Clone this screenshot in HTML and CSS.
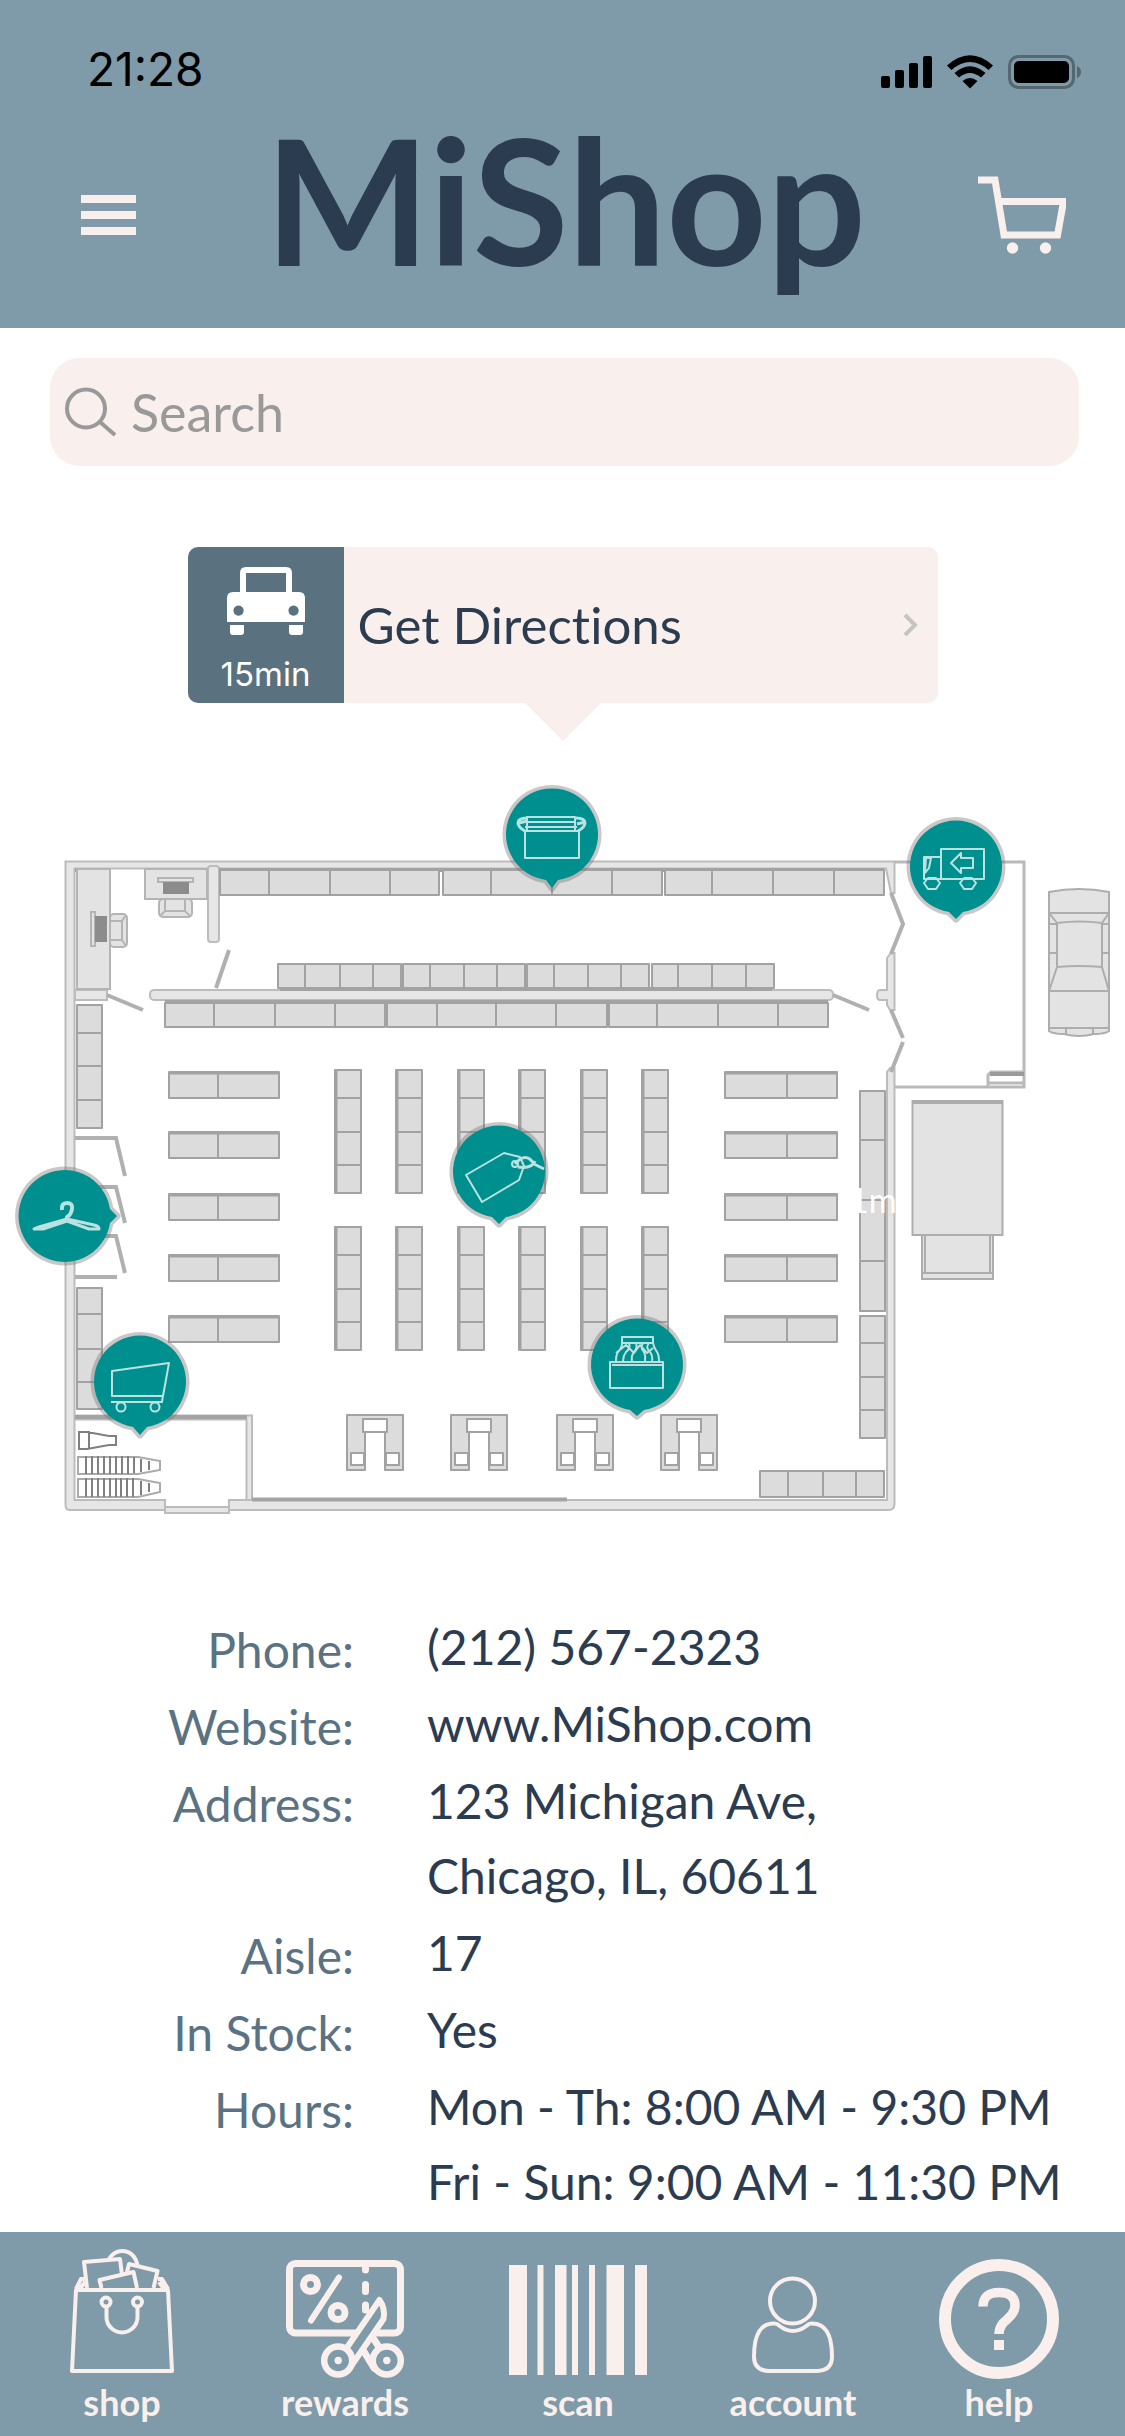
FILE: index.html
```html
<!DOCTYPE html>
<html lang="en">
<head>
<meta charset="utf-8">
<meta name="viewport" content="width=device-width, initial-scale=1">
<title>MiShop</title>
<link rel="stylesheet" href="styles.css">
</head>
<body>
<div class="page">
  <header class="header">
    <div class="status">
      <span class="clock">21:28</span>
      <svg class="status-icons" viewBox="881 54 200 36" width="200" height="36" aria-hidden="true">
        <rect x="881" y="76" width="9" height="12" rx="2"/>
        <rect x="895" y="70" width="9" height="18" rx="2"/>
        <rect x="909" y="63" width="9" height="25" rx="2"/>
        <rect x="923" y="56" width="9" height="32" rx="2"/>
        <path d="M947 65.500Q970 45 993 65.500L988.500 70Q970 54 951.500 70Z"/>
        <path d="M954.500 73Q970 59.500 985.500 73L981 77.500Q970 68.500 959 77.500Z"/>
        <path d="M962.500 81Q970 75 977.500 81L970 88.500Z"/>
        <rect x="1009.500" y="56.500" width="64" height="31" rx="9" fill="none" stroke="#55676f" stroke-width="3"/>
        <rect x="1014" y="61" width="55" height="22" rx="5"/>
        <path d="M1077 66q4 2 4 6t-4 6z" fill="#55676f"/>
      </svg>
    </div>
    <div class="bar">
      <button class="icon-button" type="button" aria-label="Menu">
        <svg viewBox="0 0 55 40" width="55" height="40"><path d="M0 4h55M0 20h55M0 36h55" stroke="#f9efec" stroke-width="8"/></svg>
      </button>
      <h1 class="brand">MiShop</h1>
      <button class="icon-button cart" type="button" aria-label="Cart">
        <svg viewBox="978 176 88 78" width="88" height="78"><path d="M978 180h17l9 55h53.500l6-33.500h-64" fill="none" stroke="#f9efec" stroke-width="7"/><circle cx="1012.500" cy="248" r="5.700" fill="#f9efec"/><circle cx="1045.500" cy="248" r="5.700" fill="#f9efec"/></svg>
      </button>
    </div>
  </header>

  <main class="main">
    <form class="search" role="search">
      <svg viewBox="0 0 52 50" width="52" height="50" aria-hidden="true"><g fill="none" stroke="#999" stroke-width="4"><circle cx="21" cy="21.500" r="19"/><path d="M35 35l15 13"/></g></svg>
      <input class="search-input" type="search" placeholder="Search" aria-label="Search">
    </form>

    <a class="directions" href="#directions">
      <span class="travel">
        <svg viewBox="225 567 78 68" width="78" height="68" aria-hidden="true"><path fill="#fff" fill-rule="evenodd" d="M244 567h40q6 0 6 6v19h7q6 0 6 6v24h-78v-24q0-6 6-6h7v-19q0-6 6-6zM244 573v19h40v-19zM236.500 605.500a5.100 5.100 0 1 0 .1 0zM291.500 605.500a5.100 5.100 0 1 0 .1 0zM228 625h14v7q0 3-3 3h-8q-3 0-3-3zM287 625h14v7q0 3-3 3h-8q-3 0-3-3z"/></svg>
        <span class="minutes">15min</span>
      </span>
      <span class="directions-text">Get Directions</span>
      <svg class="chevron" viewBox="0 0 16 26" width="16" height="26" aria-hidden="true"><path d="M3 3l10 10L3 23" fill="none" stroke="#c4c4c4" stroke-width="4"/></svg>
    </a>

    <svg class="map" viewBox="0 780 1125 740" role="img" aria-label="Store map">
      <!-- outer walls -->
      <g class="wall">
        <path d="M65.500 861.500H894.500V893H891L886 868.500H74.500V1500H165V1510H70q-4.500 0-4.500-5z"/>
        <path d="M229 1500H887V1072l3-4h4.500V1504q0 6-6 6H229z"/>
        <path d="M891 953h3.500v57H890l-3-5v-5h-7q-3 0-3-5t3-5h7v-32z"/>
        <rect x="165" y="1507" width="64" height="6"/>
        <rect x="208" y="866" width="11" height="76" rx="3"/>
        <rect x="150" y="990" width="683" height="10" rx="4"/>
        <rect x="75" y="990" width="32" height="10"/>
        <path d="M75 1415.500h177V1500h-5.500v-80.500H75z"/>
      </g>
      <g class="door">
        <path d="M216 988l13-38M107 995l36 15M833 995l36 15M891 893l12 31-12 30M891 1010l12 28M903 1042l-12 30M75 1138h41l9 38M75 1187h41l9 36M75 1236h41l9 37M75 1277h42"/>
      </g>
      <path d="M75 1417h172M252 1499.500h315M75 870h32M219 870h665M280 989h492M165 1002h663" stroke="#a3a3a3" stroke-width="4" fill="none"/>
      <path d="M895 862h129v225H895M988 1087v-12l3-3h33M988 1083h36" fill="none" stroke="#b9b9b9" stroke-width="3"/>
      <path d="M990 1074h34" stroke="#9a9a9a" stroke-width="4"/>

      <!-- office desks -->
      <g class="desk">
        <rect x="77" y="869" width="33" height="120"/><rect x="145" y="869" width="62" height="30"/>
        <rect x="110" y="914" width="17" height="33" rx="4"/><path d="M110 921h12l4-6M110 940h12l4 6M122 921v19"/>
        <rect x="159" y="899" width="33" height="18" rx="4"/><path d="M165 899v12l-5 5M185 899v12l5 5M165 911h20"/>
        <rect x="91" y="912" width="4" height="34"/><rect x="158" y="878" width="35" height="4"/>
      </g>
      <path d="M95 916h12v26H95zM163 882h26v12h-26z" fill="#8c8c8c"/>

      <!-- wall shelves -->
      <g class="shelf">
        <path d="M220 870h219v25H220zM269 870v25M330 870v25M390 870v25M443 870h219v25H443zM491 870v25M552 870v25M612 870v25M665 870h219v25H665zM712 870v25M773 870v25M834 870v25"/>
        <path d="M278 964h123v24H278zM305 964v24M340 964v24M373 964v24M403 964h122v24H403zM430 964v24M464 964v24M497 964v24M527 964h122v24H527zM554 964v24M588 964v24M621 964v24M652 964h122v24H652zM678 964v24M712 964v24M746 964v24"/>
        <path d="M165 1003h220v24H165zM214 1003v24M275 1003v24M335 1003v24M387 1003h220v24H387zM437 1003v24M496 1003v24M556 1003v24M609 1003h219v24H609zM657 1003v24M718 1003v24M778 1003v24"/>
        <path d="M77 1005h25v123H77zM77 1033h25M77 1066h25M77 1100h25M77 1288h25v121H77zM77 1314h25M77 1349h25M77 1382h25"/>
        <path d="M860 1091h25v220h-25zM860 1140h25M860 1200h25M860 1261h25M860 1316h25v122h-25zM860 1343h25M860 1377h25M860 1410h25"/>
        <path d="M760 1471h124v26H760zM788 1471v26M823 1471v26M856 1471v26"/>
      </g>

      <!-- aisle shelves -->
      <defs>
        <g id="wide"><path d="M0 0h110v26H0zM49 0v26"/><path d="M0 1h110" stroke-width="3"/></g>
        <g id="wide-right"><path d="M0 0h112v26H0zM62 0v26"/><path d="M0 1h112" stroke-width="3"/></g>
        <g id="tall"><path d="M0 0h26v123H0zM0 28h26M0 62h26M0 95h26"/><path d="M1 0v123" stroke-width="3"/></g>
        <g id="till"><path d="M0 0h56v55H38V17H18v38H0z"/><path fill="#fff" d="M16 4h24v13H16zM4 38h13v12H4zM39 38h13v12H39z"/></g>
      </defs>
      <g class="shelf">
        <use href="#wide" x="169" y="1072"/><use href="#wide" x="169" y="1132"/><use href="#wide" x="169" y="1194"/><use href="#wide" x="169" y="1255"/><use href="#wide" x="169" y="1316"/>
        <use href="#wide-right" x="725" y="1072"/><use href="#wide-right" x="725" y="1132"/><use href="#wide-right" x="725" y="1194"/><use href="#wide-right" x="725" y="1255"/><use href="#wide-right" x="725" y="1316"/>
        <use href="#tall" x="335" y="1070"/><use href="#tall" x="396" y="1070"/><use href="#tall" x="458" y="1070"/><use href="#tall" x="519" y="1070"/><use href="#tall" x="581" y="1070"/><use href="#tall" x="642" y="1070"/>
        <use href="#tall" x="335" y="1227"/><use href="#tall" x="396" y="1227"/><use href="#tall" x="458" y="1227"/><use href="#tall" x="519" y="1227"/><use href="#tall" x="581" y="1227"/><use href="#tall" x="642" y="1227"/>
        <use href="#till" x="347" y="1415"/><use href="#till" x="451" y="1415"/><use href="#till" x="557" y="1415"/><use href="#till" x="661" y="1415"/>
      </g>

      <!-- parked trolleys -->
      <g fill="none" stroke="#808080" stroke-width="2">
        <path d="M79 1432h10v17H79zM87 1432l22 4h7v9h-7l-22 4"/>
        <path d="M78 1457h60l22 4v9l-22 4H78zM78 1479h60l22 4v9l-22 5H78z" stroke="#aaa"/>
        <path d="M86 1456v18M92 1456v18M98 1456v18M104 1456v18M110 1456v18M116 1456v18M122 1456v18M128 1456v18M134 1457v16M141 1459v13M149 1461v9M86 1478v19M92 1478v19M98 1478v19M104 1478v19M110 1478v19M116 1478v19M121 1478v19M127 1478v19M133 1478v19M141 1481v14M149 1483v9"/>
      </g>

      <!-- vehicles outside -->
      <g class="vehicle">
        <path d="M1049 892q30-6 60 0v139q-4 3-15 3-15 4-30 0-11 0-15-3z"/>
        <path d="M1049 913h60v78h-60zM1049 913l8 10v44l-8 24M1109 913l-7 10v44l7 24M1057 923q22-3 45 0M1057 967q22-2 45 0M1049 924h8M1102 924h7M1049 953h8M1102 953h7M1049 1028h60M1066 1028v6M1093 1028v6"/>
        <rect x="912.500" y="1101" width="90" height="134"/><path d="M912 1102h90" stroke-width="4"/>
        <path d="M922 1235h71v44h-71zM922 1273h71M925 1235v38M990 1235v38"/>
      </g>
      <text class="distance" x="849" y="1213">1mi</text>

      <!-- department pins -->
      <g class="pin">
        <path d="M546 880l6 8 6-8a46 46 0 1 0-12 0z"/>
        <path d="M949 912l7 7 7-7a46 46 0 1 0-14 0z"/>
        <path d="M492 1217l7 7 7-7a46 46 0 1 0-14 0z"/>
        <path d="M110 1209l7 7-7 7a46 46 0 1 1 0-14z"/>
        <path d="M133 1427l7 8 7-8a46 46 0 1 0-14 0z"/>
        <path d="M630 1410l7 6 7-6a46 46 0 1 0-14 0z"/>
      </g>
      <g class="pin-icon">
        <path d="M525 831h54v27h-54zM527 817h48v5h-48zM525 827h52M527 822v9M575 822v9"/>
        <path d="M527 818q-9 0-9 5 0 4 7 8M519 823l8-2M576 818q9 0 9 5 0 4-7 8M577 824l8-2" stroke-width="3"/>
        <path d="M941 849h43v30h-43zM941 857h-17v22h17M926 858h5l-2 10-4 5zM951 863l10-10v5h12v10h-12v5z"/>
        <path d="M928 878h8l4 5-4 6h-8l-4-6zM964 878h8l4 5-4 6h-8l-4-6z"/>
        <path d="M466 1175l38-22 16 4 4 9-5 14-37 22z"/><circle cx="515" cy="1164" r="3"/>
        <path d="M515 1164q11-13 19 0l10 5M518 1167q14 2 17-6" stroke-width="3"/>
        <path d="M62 1210q-1-7 5-7t5 6-5 8v3" stroke-width="4"/>
        <path d="M67 1219l-28 8q-5 2-5 2h9l24-8 22 8h10q0-3-5-4z" stroke-width="3"/>
        <path d="M169 1363l-57 8v25h51zM111 1402h51l1-7"/><circle cx="121" cy="1407" r="4.500"/><circle cx="155" cy="1407" r="4.500"/>
        <path d="M610 1362h53v26h-53zM612 1365h50M622 1337h31v6h-31zM622 1343q0 5-4 9-2 3-2 9M653 1343q1 5 4 9 2 3 2 9M629 1343q2 5-3 9-3 4-3 9M636 1343q2 5-2 9-3 4-2 9M643 1343q-3 5 1 9 2 4 1 9M649 1343q-4 5 1 9 3 4 2 9M616 1353l10-8 8 8 6-8 7 8 6-5"/>
      </g>
    </svg>

    <dl class="details">
      <dt>Phone:</dt><dd>(212) 567-2323</dd>
      <dt>Website:</dt><dd>www.MiShop.com</dd>
      <dt>Address:</dt><dd>123 Michigan Ave,<br>Chicago, IL, 60611</dd>
      <dt>Aisle:</dt><dd>17</dd>
      <dt>In Stock:</dt><dd>Yes</dd>
      <dt>Hours:</dt><dd>Mon - Th: 8:00 AM - 9:30 PM<br>Fri - Sun: 9:00 AM - 11:30 PM</dd>
    </dl>
  </main>

  <nav class="tabs" aria-label="Main">
    <a class="tab" href="#shop">
      <svg viewBox="70 2249 104 130" width="104" height="130" aria-hidden="true"><g fill="none" stroke="#f9efec" stroke-width="4" stroke-linejoin="round"><path d="M76 2290h92l4 81H72zM76 2289l5-10h4M168 2289l-6-10h-4M80 2289l5-7M164 2289l-5-7"/><path d="M87 2288l-3-26 36-3 2 16M127 2272l2-8 28.500 7-4 17M101.500 2288l-2-8 34-8 3.500 16"/><path d="M109 2259q5-8 13-8 12 0 15.500 14"/><circle cx="106" cy="2302" r="4.500"/><circle cx="137.500" cy="2302" r="4.500"/><path d="M106.500 2307v10a15.500 15.500 0 0 0 31 0v-10"/></g></svg>
      <span>shop</span>
    </a>
    <a class="tab" href="#rewards">
      <svg viewBox="286 2249 118 130" width="118" height="130" aria-hidden="true"><g fill="none" stroke="#f9efec" stroke-width="7" stroke-linecap="round" stroke-linejoin="round"><rect x="289.500" y="2263.500" width="111" height="69.500" rx="6"/><path d="M365.500 2265v5M365.500 2284.500v7M365.500 2305v5"/><circle cx="310.500" cy="2284.500" r="7"/><circle cx="338" cy="2312.500" r="7"/><path d="M339 2277.500l-28 43" stroke-width="6"/><path d="M373 2338l8 12M363 2350l11 18" stroke-width="7"/><path d="M346 2349l33.500-49q6 8 4 19l-33 48z" fill="#7f9aa8" stroke-width="6"/><circle cx="338.200" cy="2360.500" r="14" fill="#7f9aa8" stroke-width="6.500"/><circle cx="386.800" cy="2360.500" r="14" fill="#7f9aa8" stroke-width="6.500"/></g><circle cx="338.200" cy="2360.500" r="3.700" fill="#f9efec"/><circle cx="386.800" cy="2360.500" r="3.700" fill="#f9efec"/></svg>
      <span>rewards</span>
    </a>
    <a class="tab" href="#scan">
      <svg viewBox="509 2249 138 130" width="138" height="130" aria-hidden="true"><path fill="#f9efec" d="M509 2265h18v110h-18zM537.500 2265h6v110h-6zM555 2265h11.500v110H555zM572 2265h6v110h-6zM589 2265h6v110h-6zM606.500 2265h17.500v110h-17.500zM635 2265h12v110h-12z"/></svg>
      <span>scan</span>
    </a>
    <a class="tab" href="#account">
      <svg viewBox="752 2249 82 130" width="82" height="130" aria-hidden="true"><g fill="none" stroke="#f9efec" stroke-width="4"><circle cx="792.500" cy="2301" r="22.500"/><path d="M775 2323.500q-21-1-21 33 0 14 15 14.500h48q15-.5 15-14.500 0-34-21-33-2 0-4 2-14 11-28 0-2-2-4-2z"/></g></svg>
      <span>account</span>
    </a>
    <a class="tab" href="#help">
      <svg viewBox="939 2249 120 130" width="120" height="130" aria-hidden="true"><g fill="none" stroke="#f9efec"><circle cx="999" cy="2319" r="54" stroke-width="12"/><path d="M983 2306.500q0-14 16-14t16 13q0 7-8 14-8 6-8 14.500" stroke-width="9.500"/></g><path d="M994 2340h10v10h-10z" fill="#f9efec"/></svg>
      <span>help</span>
    </a>
  </nav>
</div>
</body>
</html>
```
FILE: styles.css
```css
* { box-sizing: border-box; }

body {
  margin: 0;
  background: #fff;
  color: #2c3c50;
  font-family: Lato, "Liberation Sans", sans-serif;
  font-variant-ligatures: none;
}

.page {
  display: flex;
  flex-direction: column;
  min-height: 100vh;
}

.header {
  background: #7f9aa8;
  padding: 42px 0 0;
}

.status {
  display: flex;
  align-items: center;
  justify-content: space-between;
  height: 60px;
  padding: 0 44px 0 87px;
}

.clock {
  color: #000;
  font: 400 46px/54px Inter, "Liberation Sans", sans-serif;
  padding-bottom: 6px;
}

.bar {
  display: grid;
  grid-template-columns: 1fr auto 1fr;
  align-items: center;
  height: 226px;
  padding: 0 59px 0 81px;
}

.icon-button {
  justify-self: start;
  border: 0;
  padding: 0;
  background: none;
  display: flex;
}

.cart { justify-self: end; }

.brand {
  align-self: start;
  margin: 11px 16px 0 0;
  font-size: 175px;
  line-height: 170px;
  font-weight: 700;
}

.main {
  flex: 1;
  display: flex;
  flex-direction: column;
}

.search {
  display: flex;
  align-items: center;
  gap: 14px;
  height: 108px;
  margin: 30px 46px 0 50px;
  padding: 0 15px;
  border-radius: 30px;
  background: #f9efec;
}

.search-input {
  flex: 1;
  min-width: 0;
  border: 0;
  padding: 0;
  background: none;
  color: #2c3c50;
  font: 400 52px/60px Lato, "Liberation Sans", sans-serif;
  outline: none;
}

.search-input::placeholder { color: #999; opacity: 1; }

.directions {
  position: relative;
  display: flex;
  align-items: center;
  align-self: center;
  width: calc(100% * 2 / 3);
  height: 156px;
  margin-top: 81px;
  padding-right: 20px;
  border-radius: 10px;
  background: #f9efec;
  color: #2c3c50;
  text-decoration: none;
}

.directions::after {
  content: "";
  position: absolute;
  top: 100%;
  left: 50%;
  margin-left: -38px;
  border: 38px solid transparent;
  border-top-color: #f9efec;
  border-bottom: 0;
}

.travel {
  display: flex;
  flex-direction: column;
  align-items: center;
  gap: 19px;
  width: 156px;
  height: 156px;
  padding-top: 20px;
  border-radius: 10px 0 0 10px;
  background: #5a7180;
  color: #fff;
}

.minutes { font: 400 33px/40px Inter, "Liberation Sans", sans-serif; }

.directions-text {
  flex: 1;
  padding-left: 14px;
  font-size: 51px;
  line-height: 60px;
}

.map {
  display: block;
  width: 100%;
  margin-top: 77px;
}

.wall { fill: #e6e6e6; stroke: #bcbcbc; stroke-width: 2; }
.door { fill: none; stroke: #b0b0b0; stroke-width: 4; }
.desk { fill: #e3e3e3; stroke: #b4b4b4; stroke-width: 2; }
.shelf { fill: #dcdcdc; stroke: #a2a2a2; stroke-width: 2; stroke-linejoin: round; }
.vehicle { fill: #e3e3e3; stroke: #adadad; stroke-width: 2; }
.pin { fill: #008f8f; stroke: rgba(120, 115, 115, .4); stroke-width: 7; stroke-linejoin: round; paint-order: stroke; }
.pin-icon { fill: none; stroke: #b9e2e0; stroke-width: 2; stroke-linejoin: round; }
.distance { fill: #fff; font-size: 34px; }

.details {
  display: grid;
  grid-template-columns: 354fr 698fr;
  gap: 2px 73px;
  margin: 89px 0 0;
  font-size: 48px;
  line-height: 75px;
}

.details dt {
  padding-top: 3px;
  margin-bottom: -3px;
  color: #5a7282;
  text-align: right;
}

.details dd { margin: 0; }

.tabs {
  display: grid;
  grid-template-columns: 244fr 202fr 264fr 166fr 246fr;
  justify-items: center;
  padding: 17px 3px 12px 0;
  background: #7f9aa8;
}

.tab {
  display: flex;
  flex-direction: column;
  align-items: center;
  gap: 1px;
  color: #f9efec;
  font-size: 36px;
  line-height: 44px;
  font-weight: 700;
  text-decoration: none;
}
```
